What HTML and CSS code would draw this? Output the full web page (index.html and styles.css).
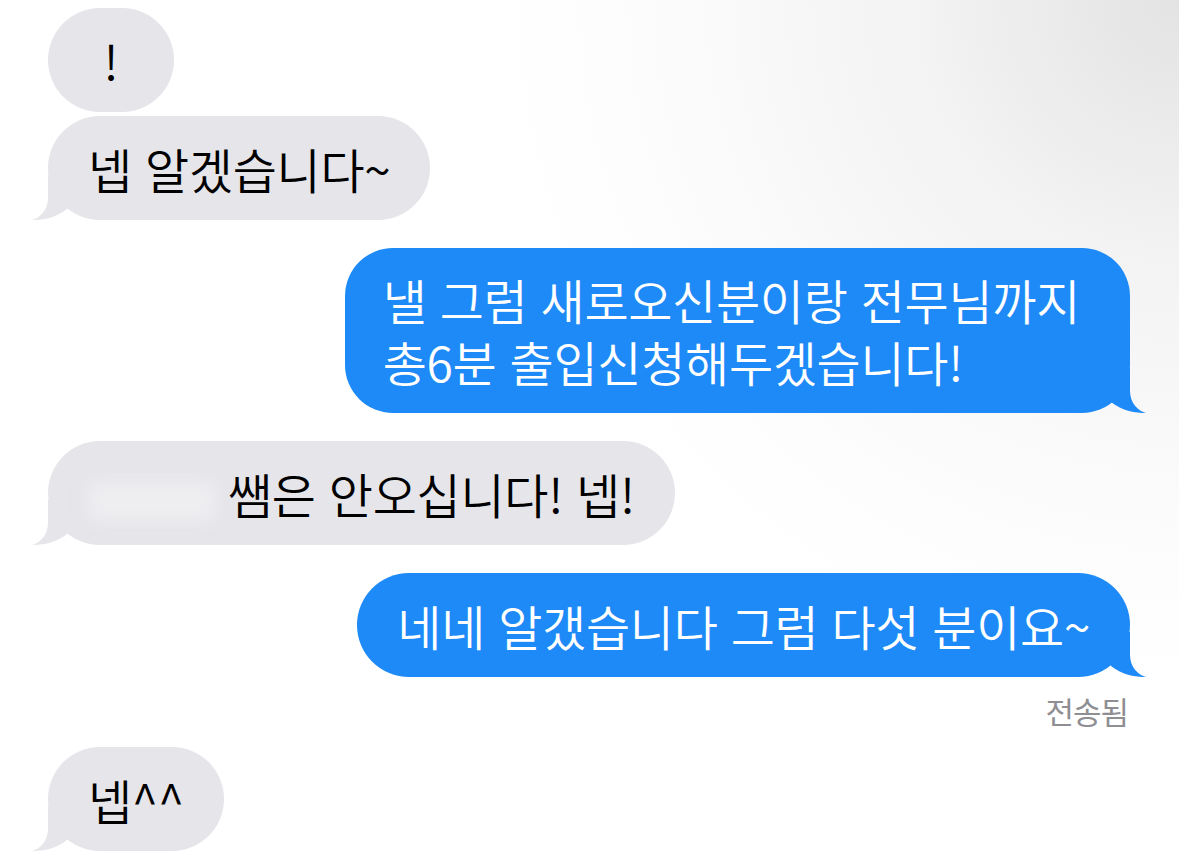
FILE: index.html
```html
<!DOCTYPE html>
<html lang="ko">
<head>
    <meta charset="UTF-8">
    <meta name="viewport" content="width=device-width, initial-scale=1.0">
    <title>메시지</title>
    <link rel="stylesheet" href="styles.css">
</head>
<body>
    <div class="chat">
        <div class="bubble in short">!</div>

        <div class="bubble in next">
            넵 알겠습니다~
            <svg class="tail" width="36" height="46" viewBox="0 0 36 46"><path d="M16,1 L16,24 C16,36 8,44 0,46 C10,46 24,44 35,35 L35,1 Z"/></svg>
        </div>

        <div class="bubble out group wrap">
            <span class="line">낼 그럼 새로오신분이랑 전무님까지</span>
            <span class="line">총6분 출입신청해두겠습니다!</span>
            <svg class="tail" width="36" height="46" viewBox="0 0 36 46"><path d="M16,1 L16,24 C16,36 8,44 0,46 C10,46 24,44 35,35 L35,1 Z"/></svg>
        </div>

        <div class="bubble in group">
            <span class="hidden-name" aria-hidden="true"></span>쌤은 안오십니다! 넵!
            <svg class="tail" width="36" height="46" viewBox="0 0 36 46"><path d="M16,1 L16,24 C16,36 8,44 0,46 C10,46 24,44 35,35 L35,1 Z"/></svg>
        </div>

        <div class="bubble out group">
            네네 알갰습니다 그럼 다섯 분이요~
            <svg class="tail" width="36" height="46" viewBox="0 0 36 46"><path d="M16,1 L16,24 C16,36 8,44 0,46 C10,46 24,44 35,35 L35,1 Z"/></svg>
        </div>
        <div class="status">전송됨</div>

        <div class="bubble in last">
            넵^^
            <svg class="tail" width="36" height="46" viewBox="0 0 36 46"><path d="M16,1 L16,24 C16,36 8,44 0,46 C10,46 24,44 35,35 L35,1 Z"/></svg>
        </div>
    </div>
</body>
</html>
```

FILE: styles.css
```css
html, body {
    height: 100%;
}
body {
    margin: 0;
    font-family: "Noto Sans CJK KR", "Noto Sans", sans-serif;
    background: radial-gradient(circle at 100% 0, #e3e3e3 0, #f3f3f3 260px, #fdfdfd 560px, #ffffff 700px);
    overflow: hidden;
}
.chat {
    display: flex;
    flex-direction: column;
    padding: 8px 49px 0 48px;
}
.bubble {
    position: relative;
    box-sizing: border-box;
    padding: 21px 40px;
    border-radius: 52px;
    font-size: 48px;
    font-weight: 350;
    letter-spacing: -0.3px;
    line-height: 62px;
    white-space: nowrap;
}
.in {
    align-self: flex-start;
    background: #e5e5ea;
    color: #000;
}
.out {
    align-self: flex-end;
    background: #1d8af8;
    color: #fff;
}
.short {
    min-width: 126px;
    text-align: center;
}
.next {
    margin-top: 4px;
}
.group {
    margin-top: 28px;
}
.last {
    margin-top: 16px;
}
.wrap {
    padding: 20px 50px 21px 38px;
    border-radius: 48px;
}
.line {
    display: block;
}
.tail {
    position: absolute;
    bottom: 0;
}
.in .tail {
    left: -16px;
    fill: #e5e5ea;
}
.out .tail {
    right: -16px;
    fill: #1d8af8;
    transform: scaleX(-1);
}
.hidden-name {
    display: inline-block;
    width: 128px;
    height: 40px;
    margin-right: 12px;
    background: #eeeef1;
    filter: blur(8px);
    vertical-align: middle;
}
.status {
    align-self: flex-end;
    margin-top: 14px;
    margin-right: 2px;
    font-size: 31px;
    letter-spacing: -1px;
    line-height: 40px;
    color: #8e8e93;
}
```
